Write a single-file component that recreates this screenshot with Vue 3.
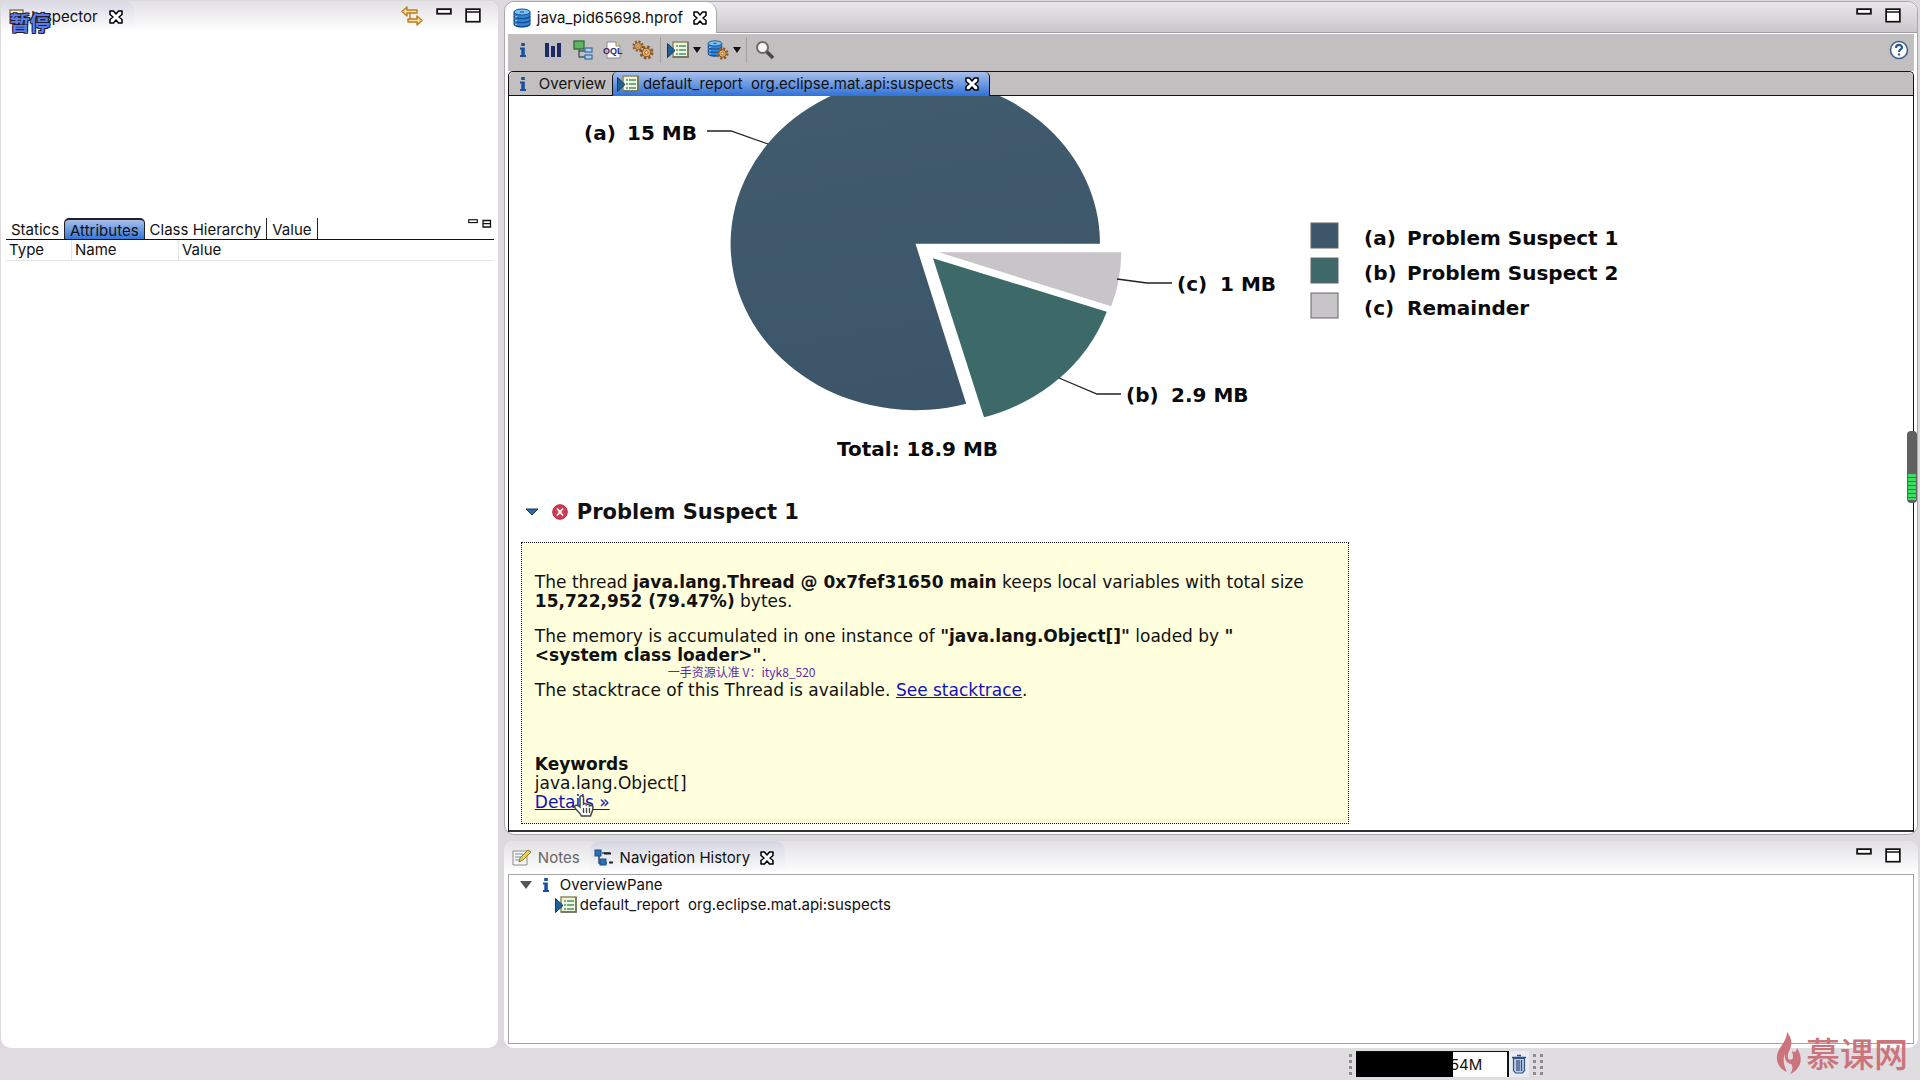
<template>
  <div class="workbench">
    <!-- Shared icon symbols -->
    <svg class="symbols" aria-hidden="true">
      <symbol id="close" viewBox="0 0 16 16">
        <path d="M2 2h3.500L8 5l2.500-3H14v3.500L11 8l3 2.500V14h-3.500L8 11l-2.500 3H2v-3.500L5 8 2 5.500z" fill="#fff" stroke="#000" stroke-width="1.500" stroke-linejoin="round" />
      </symbol>
      <symbol id="minimize" viewBox="0 0 14 14">
        <rect x="1" y="1" width="12" height="4" fill="#fff" stroke="#111" stroke-width="1.600" />
      </symbol>
      <symbol id="maximize" viewBox="0 0 14 14">
        <rect x="1" y="1" width="12" height="11" fill="#fff" stroke="#111" stroke-width="1.500" />
        <path d="M1 3.500h12" stroke="#111" stroke-width="1.300" />
      </symbol>
      <symbol id="info" viewBox="0 0 16 16">
        <path d="M6.200 1h3.600v3H6.200zM5 5.500h4.800v7.500H11V15H5v-2h1.300V7.500H5z" fill="#17509c" />
      </symbol>
      <symbol id="report" viewBox="0 0 22 18">
        <rect x="6" y="1" width="15" height="15" fill="#eef5dc" stroke="#8d8b5c" stroke-width="1.500" />
        <path d="M21 1v15H6" fill="none" stroke="#667064" stroke-width="1.500" />
        <path d="M9 5h2M9 9h2M9 13h2M12 5h7M12 9h7M12 13h7" stroke="#4f8f74" stroke-width="1.500" />
        <path d="M.5 2.500v14L8 9.500z" fill="#1f6296" stroke="#12375e" />
      </symbol>
      <symbol id="database" viewBox="0 0 18 20">
        <path d="M1 4v12c0 4 16 4 16 0V4z" fill="#3283d6" stroke="#134f93" />
        <ellipse cx="9" cy="4" rx="8" ry="3" fill="#7cc0f2" stroke="#134f93" />
        <path d="M1 8c1 3.500 15 3.500 16 0M1 12c1 3.500 15 3.500 16 0M1 16c1 3.500 15 3.500 16 0" fill="none" stroke="#134f93" stroke-width="1.300" />
        <path d="M3 8v1.500M3 12v1.500M3 16v1" stroke="#b3dcfa" stroke-width="1.500" />
        <path d="M7 4h4" stroke="#134f93" />
      </symbol>
      <symbol id="gear" viewBox="0 0 16 16">
        <circle cx="8" cy="8" r="6" fill="none" stroke="#8d5727" stroke-width="3" stroke-dasharray="2.600 2.110" />
        <circle cx="8" cy="8" r="4.500" fill="#e9b15e" stroke="#8d5727" stroke-width="1.200" />
        <circle cx="8" cy="8" r="1.800" fill="#f5e9d6" stroke="#8d5727" />
      </symbol>
    </svg>

    <div class="panels">
      <!-- Inspector view -->
      <section class="panel inspector">
        <header class="view-head">
          <button class="view-tab inspector-tab">
            <svg width="16" height="16" viewBox="0 0 16 16"><rect x="1" y="1" width="13" height="13" fill="#f2ecd2" stroke="#8b7a4e" stroke-width="1.500" /><path d="M4 5h7M4 8h7" stroke="#555" /></svg>
            <span>Inspector</span>
            <svg width="16" height="16"><use href="#close" /></svg>
          </button>
          <span class="spacer"></span>
          <button class="icon-btn" aria-label="Link with snapshot">
            <svg width="22" height="20" viewBox="0 0 22 20">
              <path d="M1 5.500l5-4.500v3h10v3H6v3zM21 14.500l-5-4.500v3H7v3h9v3z" fill="#fbe3a6" stroke="#bd7b1e" stroke-width="1.400" stroke-linejoin="round" />
              <path d="M9 7v6" stroke="#bd7b1e" stroke-width="1.400" />
            </svg>
          </button>
          <button class="icon-btn" aria-label="Minimize"><svg width="16" height="16"><use href="#minimize" /></svg></button>
          <button class="icon-btn" aria-label="Maximize"><svg width="16" height="16"><use href="#maximize" /></svg></button>
        </header>
        <span class="pause">暂停</span>
        <div class="inspector-info"></div>
        <nav class="sub-tabs">
          <button v-for="tab in inspectorTabs" :key="tab" :class="{ active: tab === activeTab }" @click="activeTab = tab">{{ tab }}</button>
          <span class="spacer"></span>
          <span class="mini-icons">
            <svg width="10" height="10"><use href="#minimize" /></svg>
            <svg width="10" height="10" viewBox="0 0 10 10"><path d="M1 1.500h7.500v6.500H1zM1 4.700h7.500" fill="#fff" stroke="#111" stroke-width="1.300" /></svg>
          </span>
        </nav>
        <table class="attributes">
          <thead>
            <tr><th class="col-type">Type</th><th class="col-name">Name</th><th>Value</th></tr>
          </thead>
        </table>
      </section>

      <div class="main">
        <!-- Heap dump editor -->
        <section class="panel editor">
          <header class="editor-head">
            <button class="editor-tab">
              <svg width="18" height="20"><use href="#database" /></svg>
              <span>java_pid65698.hprof</span>
              <svg width="16" height="16"><use href="#close" /></svg>
            </button>
            <span class="spacer"></span>
            <button class="icon-btn" aria-label="Minimize"><svg width="16" height="16"><use href="#minimize" /></svg></button>
            <button class="icon-btn" aria-label="Maximize"><svg width="16" height="16"><use href="#maximize" /></svg></button>
          </header>

          <div class="toolbar">
            <button class="tool" aria-label="Overview"><svg width="16" height="16"><use href="#info" /></svg></button>
            <button class="tool" aria-label="Histogram">
              <svg width="18" height="18" viewBox="0 0 18 18"><path d="M1 2h4v14H1zM7 5h4v11H7zM13 2h4v14h-4z" fill="#1c2a66" /></svg>
            </button>
            <button class="tool" aria-label="Dominator tree">
              <svg width="20" height="20" viewBox="0 0 20 20">
                <path d="M6 9v8h6M6 11h6" fill="none" stroke="#47545f" stroke-width="1.300" />
                <rect x="1" y="1" width="10" height="8" fill="#5fb562" stroke="#2f6c39" stroke-width="1.300" />
                <rect x="12" y="8" width="7" height="4" fill="#a9d1f1" stroke="#396c9d" stroke-width="1.200" />
                <rect x="12" y="15" width="7" height="4" fill="#a9d1f1" stroke="#396c9d" stroke-width="1.200" />
              </svg>
            </button>
            <button class="tool" aria-label="OQL">
              <svg width="20" height="20" viewBox="0 0 20 20">
                <path d="M4 2h9l4 4v12H4z" fill="#fff" stroke="#8f8c8c" /><path d="M13 2v4h4" fill="#e8d8a8" stroke="#a38a55" />
                <text x="0" y="14" class="oql">OQL</text>
              </svg>
            </button>
            <button class="tool" aria-label="Thread overview">
              <svg width="22" height="20" viewBox="0 0 22 20">
                <use href="#gear" x="0" y="0" width="12" height="12" /><use href="#gear" x="7" y="5" width="15" height="15" />
              </svg>
            </button>
            <i class="separator"></i>
            <button class="tool wide" aria-label="Run expert system test">
              <svg width="22" height="18"><use href="#report" /></svg><i class="caret"></i>
            </button>
            <button class="tool wide" aria-label="Open query browser">
              <svg width="22" height="20" viewBox="0 0 22 20">
                <use href="#database" x="0" y="0" width="16" height="17" /><use href="#gear" x="9" y="7" width="13" height="13" />
              </svg><i class="caret"></i>
            </button>
            <i class="separator"></i>
            <button class="tool" aria-label="Find">
              <svg width="20" height="20" viewBox="0 0 20 20"><path d="M11 11l7 7" stroke="#4c4646" stroke-width="3.500" /><circle cx="7.500" cy="7.500" r="5.500" fill="#f6f6f6" stroke="#6e6a68" stroke-width="2" /></svg>
            </button>
            <span class="spacer"></span>
            <button class="tool" aria-label="Help">
              <svg width="20" height="20" viewBox="0 0 20 20">
                <circle cx="10" cy="10" r="8.500" fill="#fff" stroke="#3a5c86" stroke-width="1.500" />
                <path d="M7 8c0-4 6-4 6-.5 0 2-3 2-3 4.500M10 13.500v2" fill="none" stroke="#2b568c" stroke-width="2.200" />
              </svg>
            </button>
          </div>

          <div class="pages">
            <nav class="page-tabs">
              <button class="page-tab"><svg width="16" height="16"><use href="#info" /></svg><span>Overview</span></button>
              <button class="page-tab selected">
                <svg width="22" height="18"><use href="#report" /></svg>
                <span>default_report&nbsp; org.eclipse.mat.api:suspects</span>
                <svg class="page-close" width="16" height="16"><use href="#close" /></svg>
              </button>
            </nav>

            <article class="report">
              <svg class="chart" width="1160" height="388" viewBox="510 96 1160 388">
                <defs>
                  <linearGradient id="shade" x1="0" y1="0" x2="0.200" y2="1">
                    <stop offset="0" stop-color="#425c6f" /><stop offset="1" stop-color="#3c5568" />
                  </linearGradient>
                </defs>
                <path d="M915.500 243.700H1100A184.700 166.300 0 1 0 966.200 403.700z" fill="url(#shade)" />
                <path d="M933 258.300L1106.800 311.700A184.700 166.300 0 0 1 984 417.300z" fill="#3d6969" />
                <path d="M939 252.300H1121.200A184.700 166.300 0 0 1 1111.200 306.300z" fill="#c8c5c8" />
                <path d="M707 131H731L768 144M1059 378L1097 394H1121M1117 279L1147 283H1172" fill="none" stroke="#222" stroke-width="1.300" />
                <text x="584" y="140">(a)</text><text x="627" y="140">15 MB</text>
                <text x="1177" y="291">(c)</text><text x="1220" y="291">1 MB</text>
                <text x="1126" y="402">(b)</text><text x="1171" y="402">2.9 MB</text>
                <text x="837" y="456">Total: 18.9 MB</text>
                <g v-for="(item, i) in legend" :key="item.key">
                  <rect x="1311" :y="223 + i * 35" width="27" height="25" :fill="item.color" stroke="#666" />
                  <text x="1364" :y="245 + i * 35">({{ item.key }})</text>
                  <text x="1407" :y="245 + i * 35">{{ item.label }}</text>
                </g>
              </svg>

              <h2 class="suspect-title">
                <svg width="14" height="8" viewBox="0 0 14 8"><path d="M1 1h12L7 7z" fill="#2f6da3" stroke="#1c3352" /></svg>
                <svg width="16" height="16" viewBox="0 0 16 16">
                  <circle cx="8" cy="8" r="7.300" fill="#d13a50" stroke="#b3283d" /><path d="M5 4.500l6 7M11 4.500l-6 7" stroke="#fff" stroke-width="1.800" />
                </svg>
                <span>Problem Suspect 1</span>
              </h2>

              <div class="suspect">
                <p>The thread <b>java.lang.Thread @ 0x7fef31650 main</b> keeps local variables with total size <b>15,722,952 (79.47%)</b> bytes.</p>
                <p>The memory is accumulated in one instance of <b>"java.lang.Object[]"</b> loaded by <b>"<br>&lt;system class loader&gt;"</b>.</p>
                <p>The stacktrace of this Thread is available. <a href="#">See stacktrace</a>.</p>
                <p class="keywords">
                  <b>Keywords</b><br>java.lang.Object[]<br>
                  <a class="details" href="#">Details »
                    <svg class="hand" width="22" height="24" viewBox="0 0 22 24">
                      <path d="M7 13V3.500c0-2.500 3.500-2.500 3.500 0V10c1-1 3-.8 3 .8 1-1 3-.6 3 1 1.500-1 3.500 0 3.500 1.700 0 4-1.500 5-2.500 8.500h-9C7 18 2 16 1.500 12.500 2 10.500 5 11 7 13z" fill="#fff" stroke="#444" stroke-width="1.500" />
                      <path d="M10.500 14v5M13.500 14v5M16.500 14v5" stroke="#444" stroke-width="1.300" />
                    </svg>
                  </a>
                </p>
                <span class="watermark">一手资源认准 V：ityk8_520</span>
              </div>
            </article>
            <span class="meter"><i></i></span>
          </div>
        </section>

        <!-- Notes and navigation history -->
        <section class="panel history">
          <header class="view-head">
            <button class="view-tab notes">
              <svg width="20" height="18" viewBox="0 0 20 18">
                <path d="M1 2h14v14H1z" fill="#f7f7f7" stroke="#8a8a8a" /><path d="M3 5h8M3 8h6M3 11h4" stroke="#7c87a5" />
                <path d="M7 13l1-4 8-8 3 2-8 8z" fill="#e9cf4e" stroke="#8c7a3a" />
              </svg>
              <span>Notes</span>
            </button>
            <button class="view-tab current">
              <svg width="20" height="18" viewBox="0 0 20 18">
                <path d="M5 7v7h4M8 4h8M12 14h1" fill="none" stroke="#31465c" stroke-width="1.500" />
                <rect x="1" y="1" width="6" height="6" fill="#2a70b8" stroke="#184c86" /><rect x="6" y="10" width="6" height="6" fill="#2a70b8" stroke="#184c86" />
                <path d="M10 4.500h7M15 13.500h4" stroke="#222" stroke-width="2" />
              </svg>
              <span>Navigation History</span>
              <svg class="gap-left" width="16" height="16"><use href="#close" /></svg>
            </button>
            <span class="spacer"></span>
            <button class="icon-btn" aria-label="Minimize"><svg width="16" height="16"><use href="#minimize" /></svg></button>
            <button class="icon-btn" aria-label="Maximize"><svg width="16" height="16"><use href="#maximize" /></svg></button>
          </header>
          <ul class="tree">
            <li>
              <svg width="12" height="10" viewBox="0 0 12 10"><path d="M0 1h12L6 9z" fill="#555" /></svg>
              <svg class="tree-info" width="16" height="16"><use href="#info" /></svg>
              <span>OverviewPane</span>
            </li>
            <li class="child">
              <svg width="22" height="18"><use href="#report" /></svg>
              <span>default_report&nbsp; org.eclipse.mat.api:suspects</span>
            </li>
          </ul>
        </section>
      </div>
    </div>

    <!-- Heap status -->
    <footer class="status">
      <i class="grip"></i>
      <div class="heap"><i></i><span>54M</span></div>
      <button class="trash" aria-label="Run garbage collector">
        <svg width="16" height="20" viewBox="0 0 16 20">
          <path d="M2.500 4.500h11v12l-2 2.500h-7l-2-2.500z" fill="#b9cde9" stroke="#33517f" stroke-width="1.200" />
          <path d="M1 3.500h14M6 1.500h4M6 6v11M8 6v11M10.500 6v11" stroke="#33517f" stroke-width="1.300" />
        </svg>
      </button>
      <i class="grip"></i><i class="grip"></i>
    </footer>

    <div class="brand">
      <svg width="26" height="44" viewBox="0 0 26 44">
        <path d="M11 1c4 5 5 10 4 14-1 5-4 7-3 12 1 3 5 2 5-1 0-3-1-4-1-6 3 2 4 1 5-3 4 6 5 13 2 18-2 4-6 7-9 8 3-4 3-8 1-10-4-1-7-4-6-10-2 4-2 10 2 18C4 38 0 32 1 25c1-9 10-14 10-24z" />
      </svg>
      <span>慕课网</span>
    </div>
  </div>
</template>

<script setup>
import { ref } from "vue";

const inspectorTabs = ["Statics", "Attributes", "Class Hierarchy", "Value"];
const activeTab = ref("Attributes");

// Legend entries of the pie chart
const legend = [
  { key: "a", label: "Problem Suspect 1", color: "#3d566a" },
  { key: "b", label: "Problem Suspect 2", color: "#3d6969" },
  { key: "c", label: "Remainder", color: "#c8c5c8" },
];
</script>

<style>
body {
  margin: 0;
  background: #dcdadc;
}
</style>

<style scoped>
.workbench {
  position: relative;
  display: flex;
  flex-direction: column;
  height: 100vh;
  overflow: hidden;
  background: #dcdadc;
  color: #111;
  font: 15px/20px Inter, "Noto Sans CJK SC", sans-serif;
}

.symbols {
  position: absolute;
  width: 0;
  height: 0;
}

button {
  display: flex;
  align-items: center;
  padding: 0;
  border: 0;
  background: none;
  color: inherit;
  font: inherit;
  white-space: nowrap;
}

svg {
  flex: none;
  display: block;
}

.spacer {
  flex: 1;
}

.panels {
  flex: 1;
  min-height: 0;
  display: grid;
  grid-template-columns: 26fr 74fr;
  gap: 6px;
  padding: 1px 2px 0 1px;
}

.panel {
  box-sizing: border-box;
  border-radius: 10px;
  background: #fff;
  min-width: 0;
}

/* Inspector */
.inspector {
  position: relative;
  display: flex;
  flex-direction: column;
  overflow: hidden;
}

.view-head {
  flex: none;
  display: flex;
  align-items: flex-start;
  height: 31px;
  padding-right: 17px;
  border-radius: 10px 10px 0 0;
  background: linear-gradient(#e2e0e3, #fff);
}

.view-tab {
  gap: 6px;
  height: 31px;
  padding: 0 10px 0 8px;
  border-radius: 0 10px 0 0;
}

.inspector-tab {
  background: linear-gradient(#d9d8e4, #fff);
}

.inspector-tab span {
  margin-right: 4px;
}

.icon-btn {
  height: 30px;
  margin-left: 13px;
}

.pause {
  position: absolute;
  left: 9px;
  top: 12px;
  color: #5b7df0;
  font: bold 20px/20px "Noto Sans CJK SC", sans-serif;
  text-shadow: 1px 1px #222, -1px -1px #222, 1px -1px #222, -1px 1px #222;
}

.inspector-info {
  flex: none;
  height: 186px;
}

.sub-tabs {
  display: flex;
  flex: none;
  height: 21px;
  margin: 0 4px 0 5px;
  border-bottom: 1px solid #111;
}

.sub-tabs button {
  box-sizing: border-box;
  height: 21px;
  padding: 2px 5px 0;
  border-right: 1px solid #222;
}

.sub-tabs button:first-child {
  border: 0;
}

.sub-tabs .active {
  border: 1px solid #222;
  border-top-width: 2px;
  border-bottom: 0;
  border-radius: 5px 5px 0 0;
  background: linear-gradient(#a9bfe8, #3577da);
}

.mini-icons {
  display: flex;
  gap: 4px;
  padding: 1px 2px;
}

.attributes {
  margin: 0 4px 0 5px;
  border-collapse: collapse;
  table-layout: fixed;
}

.attributes th {
  padding: 0 3px;
  border-bottom: 1px solid #e4e4e4;
  border-left: 1px solid #e4e4e4;
  font-weight: 400;
  text-align: left;
}

.attributes .col-type {
  width: 59px;
  border-left: 0;
}

.attributes .col-name {
  width: 100px;
}

/* Editor */
.main {
  display: flex;
  flex-direction: column;
  gap: 6px;
  min-width: 0;
  min-height: 0;
}

.editor {
  flex: 1;
  min-height: 0;
  display: flex;
  flex-direction: column;
  padding: 0 3px 2px;
  border: 1px solid #aaa8ab;
}

.editor-head {
  flex: none;
  display: flex;
  height: 30px;
  margin: 0 -3px 1px;
  padding-right: 16px;
  border-radius: 10px 10px 0 0;
  border-bottom: 1px solid #9f9da3;
  background: linear-gradient(#e9e7ea, #c9c7cb);
}

.editor-head .icon-btn {
  height: 28px;
}

.editor-tab {
  gap: 6px;
  height: 31px;
  padding: 0 8px;
  border-right: 1px solid #aaa8ab;
  border-radius: 10px 10px 0 0;
  background: #fff;
}

.editor-tab span {
  margin-right: 3px;
}

.toolbar {
  flex: none;
  display: flex;
  align-items: center;
  height: 37px;
  background: #c1bfc0;
}

.tool {
  justify-content: center;
  width: 30px;
  height: 30px;
  margin-bottom: 6px;
}

.tool.wide {
  gap: 4px;
  width: 40px;
}

.oql {
  fill: #35256b;
  font: bold 9px "Liberation Sans", sans-serif;
}

.caret {
  border: 4px solid transparent;
  border-top: 6px solid #111;
  border-bottom: 0;
}

.separator {
  width: 1px;
  height: 26px;
  margin: 0 3px 6px 2px;
  background: #a3a1a3;
}

.pages {
  position: relative;
  flex: 1;
  min-height: 0;
  display: flex;
  flex-direction: column;
  border: 1px solid #111;
  border-bottom: 2px solid #333;
  border-radius: 5px 5px 0 0;
  background: #fff;
}

.page-tabs {
  flex: none;
  display: flex;
  height: 23px;
  border-bottom: 1px solid #111;
  border-radius: 5px 5px 0 0;
  background: #c1bfc0;
}

.page-tab {
  gap: 8px;
  height: 24px;
  padding: 0 6px;
}

.page-tab.selected {
  gap: 4px;
  padding: 0 9px 0 4px;
  border-left: 1px solid #111;
  border-right: 1px solid #111;
  border-radius: 5px 5px 0 0;
  background: linear-gradient(#a9c0ea, #2f72d8);
}

.page-close {
  margin-left: 6px;
}

.report {
  flex: 1;
  min-height: 0;
  padding-left: 1px;
  overflow: hidden;
  font: 17px/19px "DejaVu Sans", Verdana, sans-serif;
  color: #111;
}

.chart text {
  fill: #0a0a0a;
  font: bold 20px "DejaVu Sans", sans-serif;
}

.suspect-title {
  display: flex;
  align-items: center;
  margin: 16px 0 18px;
  padding-left: 15px;
  font-size: 21px;
  line-height: 24px;
}

.suspect-title svg {
  margin-right: 13px;
}

.suspect-title span {
  margin-left: -4px;
}

.suspect {
  position: relative;
  box-sizing: border-box;
  width: 59%;
  margin-left: 11px;
  padding: 14px 13px 11px;
  border: 1px dotted #111;
  background: #ffffdd;
}

.suspect p {
  margin: 16px 0;
}

.suspect .keywords {
  margin: 55px 0 0;
}

.suspect a {
  color: #1212b8;
}

.details {
  position: relative;
}

.hand {
  position: absolute;
  left: 38px;
  top: 2px;
}

.watermark {
  position: absolute;
  left: 146px;
  top: 120px;
  color: #5a2cb0;
  font: 12px/18px "Noto Sans CJK SC", sans-serif;
}

/* Scroll meter over the right edge */
.meter {
  position: absolute;
  right: -4px;
  top: 359px;
  display: flex;
  align-items: flex-end;
  box-sizing: border-box;
  width: 10px;
  height: 72px;
  padding: 0 1px 3px;
  border-radius: 4px;
  background: #606060;
}

.meter i {
  width: 8px;
  height: 26px;
  background: repeating-linear-gradient(#3ddc64 0 3px, #4b6b50 3px 4px);
}

/* History */
.history {
  flex: none;
  display: flex;
  flex-direction: column;
  padding: 0 4px 4px;
}

.history .view-head {
  height: 33px;
  margin: 0 -4px;
}

.history .view-tab {
  height: 33px;
}

.notes {
  color: #666;
}

.current {
  padding: 0 10px 0 4px;
  border-radius: 10px 10px 0 0;
  background: linear-gradient(#d5d6e2, #fff);
}

.gap-left {
  margin-left: 3px;
}

.tree {
  height: 168px;
  margin: 0;
  padding: 0;
  border: 1px solid #a5a3a5;
  list-style: none;
}

.tree li {
  display: flex;
  align-items: center;
  height: 20px;
  padding-left: 11px;
}

.tree .child {
  padding-left: 46px;
  gap: 3px;
}

.tree-info {
  margin: 0 6px;
}

/* Status bar */
.status {
  flex: none;
  display: flex;
  align-items: center;
  justify-content: flex-end;
  gap: 4px;
  height: 32px;
  padding-right: 377px;
  background: #dfdde0;
}

.grip {
  width: 3px;
  height: 21px;
  background: repeating-linear-gradient(#8e8c8e 0 3px, transparent 3px 6px);
}

.heap {
  display: flex;
  align-items: center;
  width: 151px;
  height: 25px;
  border-top: 1px solid #111;
  border-right: 2px solid #111;
  background: #fff;
}

.heap i {
  z-index: 1;
  width: 97px;
  height: 25px;
  background: #000;
}

.heap span {
  margin-left: -3px;
}

.trash {
  justify-content: center;
  width: 20px;
  height: 26px;
  margin-left: -4px;
  background: #e9eaf2;
}

.brand {
  position: absolute;
  right: 12px;
  bottom: 5px;
  display: flex;
  align-items: center;
  gap: 4px;
  color: #cb747b;
  fill: #cb747b;
  font: 500 34px/44px "Noto Sans CJK SC", sans-serif;
}
</style>
